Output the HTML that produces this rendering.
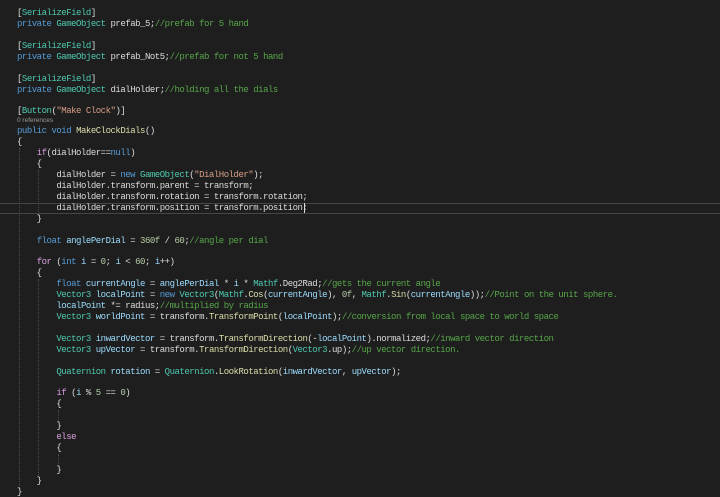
<!DOCTYPE html>
<html><head><meta charset="utf-8"><style>
html,body{margin:0;padding:0;background:#1e1e1e;width:720px;height:497px;overflow:hidden;position:relative}
.l{position:absolute;left:17px;height:11px;line-height:11px;font-family:"Liberation Mono",monospace;font-size:9px;letter-spacing:-0.48px;color:#dcdcdc;white-space:pre}
.k{color:#569cd6}.t{color:#4ec9b0}.c{color:#57a64a}.s{color:#d69d85}.n{color:#b5cea8}.p{color:#d8a0df}.v{color:#9cdcfe}.m{color:#dcdcaa}
.g{position:absolute;width:0;border-left:1px dotted #4a4a4a}
.hl{position:absolute;left:0;width:720px;top:203px;height:9px;border-top:1px solid #464646;border-bottom:1px solid #464646}
.cl{position:absolute;left:17px;top:117px;font-family:"Liberation Sans",sans-serif;font-size:6.5px;color:#999}
.cur{position:absolute;left:304px;top:203px;width:1px;height:10px;background:#dcdcdc}
</style></head><body>
<div class="hl"></div>
<div class="g" style="left:19px;top:148px;height:340px"></div>
<div class="g" style="left:38px;top:170px;height:46px"></div>
<div class="g" style="left:38px;top:279px;height:198px"></div>
<div class="g" style="left:58px;top:410px;height:12px"></div>
<div class="g" style="left:58px;top:454px;height:12px"></div>
<div class="l" style="top:7.5px">[<span class="t">SerializeField</span>]</div>
<div class="l" style="top:18.5px"><span class="k">private</span> <span class="t">GameObject</span> prefab_5;<span class="c">//prefab for 5 hand</span></div>
<div class="l" style="top:40.5px">[<span class="t">SerializeField</span>]</div>
<div class="l" style="top:51.5px"><span class="k">private</span> <span class="t">GameObject</span> prefab_Not5;<span class="c">//prefab for not 5 hand</span></div>
<div class="l" style="top:73.5px">[<span class="t">SerializeField</span>]</div>
<div class="l" style="top:84.5px"><span class="k">private</span> <span class="t">GameObject</span> dialHolder;<span class="c">//holding all the dials</span></div>
<div class="l" style="top:105.5px">[<span class="t">Button</span>(<span class="s">"Make Clock"</span>)]</div>
<div class="cl">0 references</div>
<div class="l" style="top:125.5px"><span class="k">public</span> <span class="k">void</span> <span class="m">MakeClockDials</span>()</div>
<div class="l" style="top:136.5px">{</div>
<div class="l" style="top:147.5px">    <span class="p">if</span>(dialHolder==<span class="k">null</span>)</div>
<div class="l" style="top:158.5px">    {</div>
<div class="l" style="top:169.5px">        dialHolder = <span class="k">new</span> <span class="t">GameObject</span>(<span class="s">"DialHolder"</span>);</div>
<div class="l" style="top:180.5px">        dialHolder.transform.parent = transform;</div>
<div class="l" style="top:191.5px">        dialHolder.transform.rotation = transform.rotation;</div>
<div class="l" style="top:202.5px">        dialHolder.transform.position = transform.position;</div>
<div class="cur"></div>
<div class="l" style="top:213.5px">    }</div>
<div class="l" style="top:235.5px">    <span class="k">float</span> <span class="v">anglePerDial</span> = <span class="n">360f</span> / <span class="n">60</span>;<span class="c">//angle per dial</span></div>
<div class="l" style="top:256.5px">    <span class="p">for</span> (<span class="k">int</span> <span class="v">i</span> = <span class="n">0</span>; <span class="v">i</span> &lt; <span class="n">60</span>; <span class="v">i</span>++)</div>
<div class="l" style="top:267.5px">    {</div>
<div class="l" style="top:278.5px">        <span class="k">float</span> <span class="v">currentAngle</span> = <span class="v">anglePerDial</span> * <span class="v">i</span> * <span class="t">Mathf</span>.Deg2Rad;<span class="c">//gets the current angle</span></div>
<div class="l" style="top:289.5px">        <span class="t">Vector3</span> <span class="v">localPoint</span> = <span class="k">new</span> <span class="t">Vector3</span>(<span class="t">Mathf</span>.<span class="m">Cos</span>(<span class="v">currentAngle</span>), <span class="n">0f</span>, <span class="t">Mathf</span>.<span class="m">Sin</span>(<span class="v">currentAngle</span>));<span class="c">//Point on the unit sphere.</span></div>
<div class="l" style="top:300.5px">        <span class="v">localPoint</span> *= radius;<span class="c">//multiplied by radius</span></div>
<div class="l" style="top:311.5px">        <span class="t">Vector3</span> <span class="v">worldPoint</span> = transform.<span class="m">TransformPoint</span>(<span class="v">localPoint</span>);<span class="c">//conversion from local space to world space</span></div>
<div class="l" style="top:333.5px">        <span class="t">Vector3</span> <span class="v">inwardVector</span> = transform.<span class="m">TransformDirection</span>(-<span class="v">localPoint</span>).normalized;<span class="c">//inward vector direction</span></div>
<div class="l" style="top:344.5px">        <span class="t">Vector3</span> <span class="v">upVector</span> = transform.<span class="m">TransformDirection</span>(<span class="t">Vector3</span>.up);<span class="c">//up vector direction.</span></div>
<div class="l" style="top:366.5px">        <span class="t">Quaternion</span> <span class="v">rotation</span> = <span class="t">Quaternion</span>.<span class="m">LookRotation</span>(<span class="v">inwardVector</span>, <span class="v">upVector</span>);</div>
<div class="l" style="top:387.5px">        <span class="p">if</span> (<span class="v">i</span> % <span class="n">5</span> == <span class="n">0</span>)</div>
<div class="l" style="top:398.5px">        {</div>
<div class="l" style="top:420.5px">        }</div>
<div class="l" style="top:431.5px">        <span class="p">else</span></div>
<div class="l" style="top:442.5px">        {</div>
<div class="l" style="top:464.5px">        }</div>
<div class="l" style="top:475.5px">    }</div>
<div class="l" style="top:486.5px">}</div>
</body></html>
